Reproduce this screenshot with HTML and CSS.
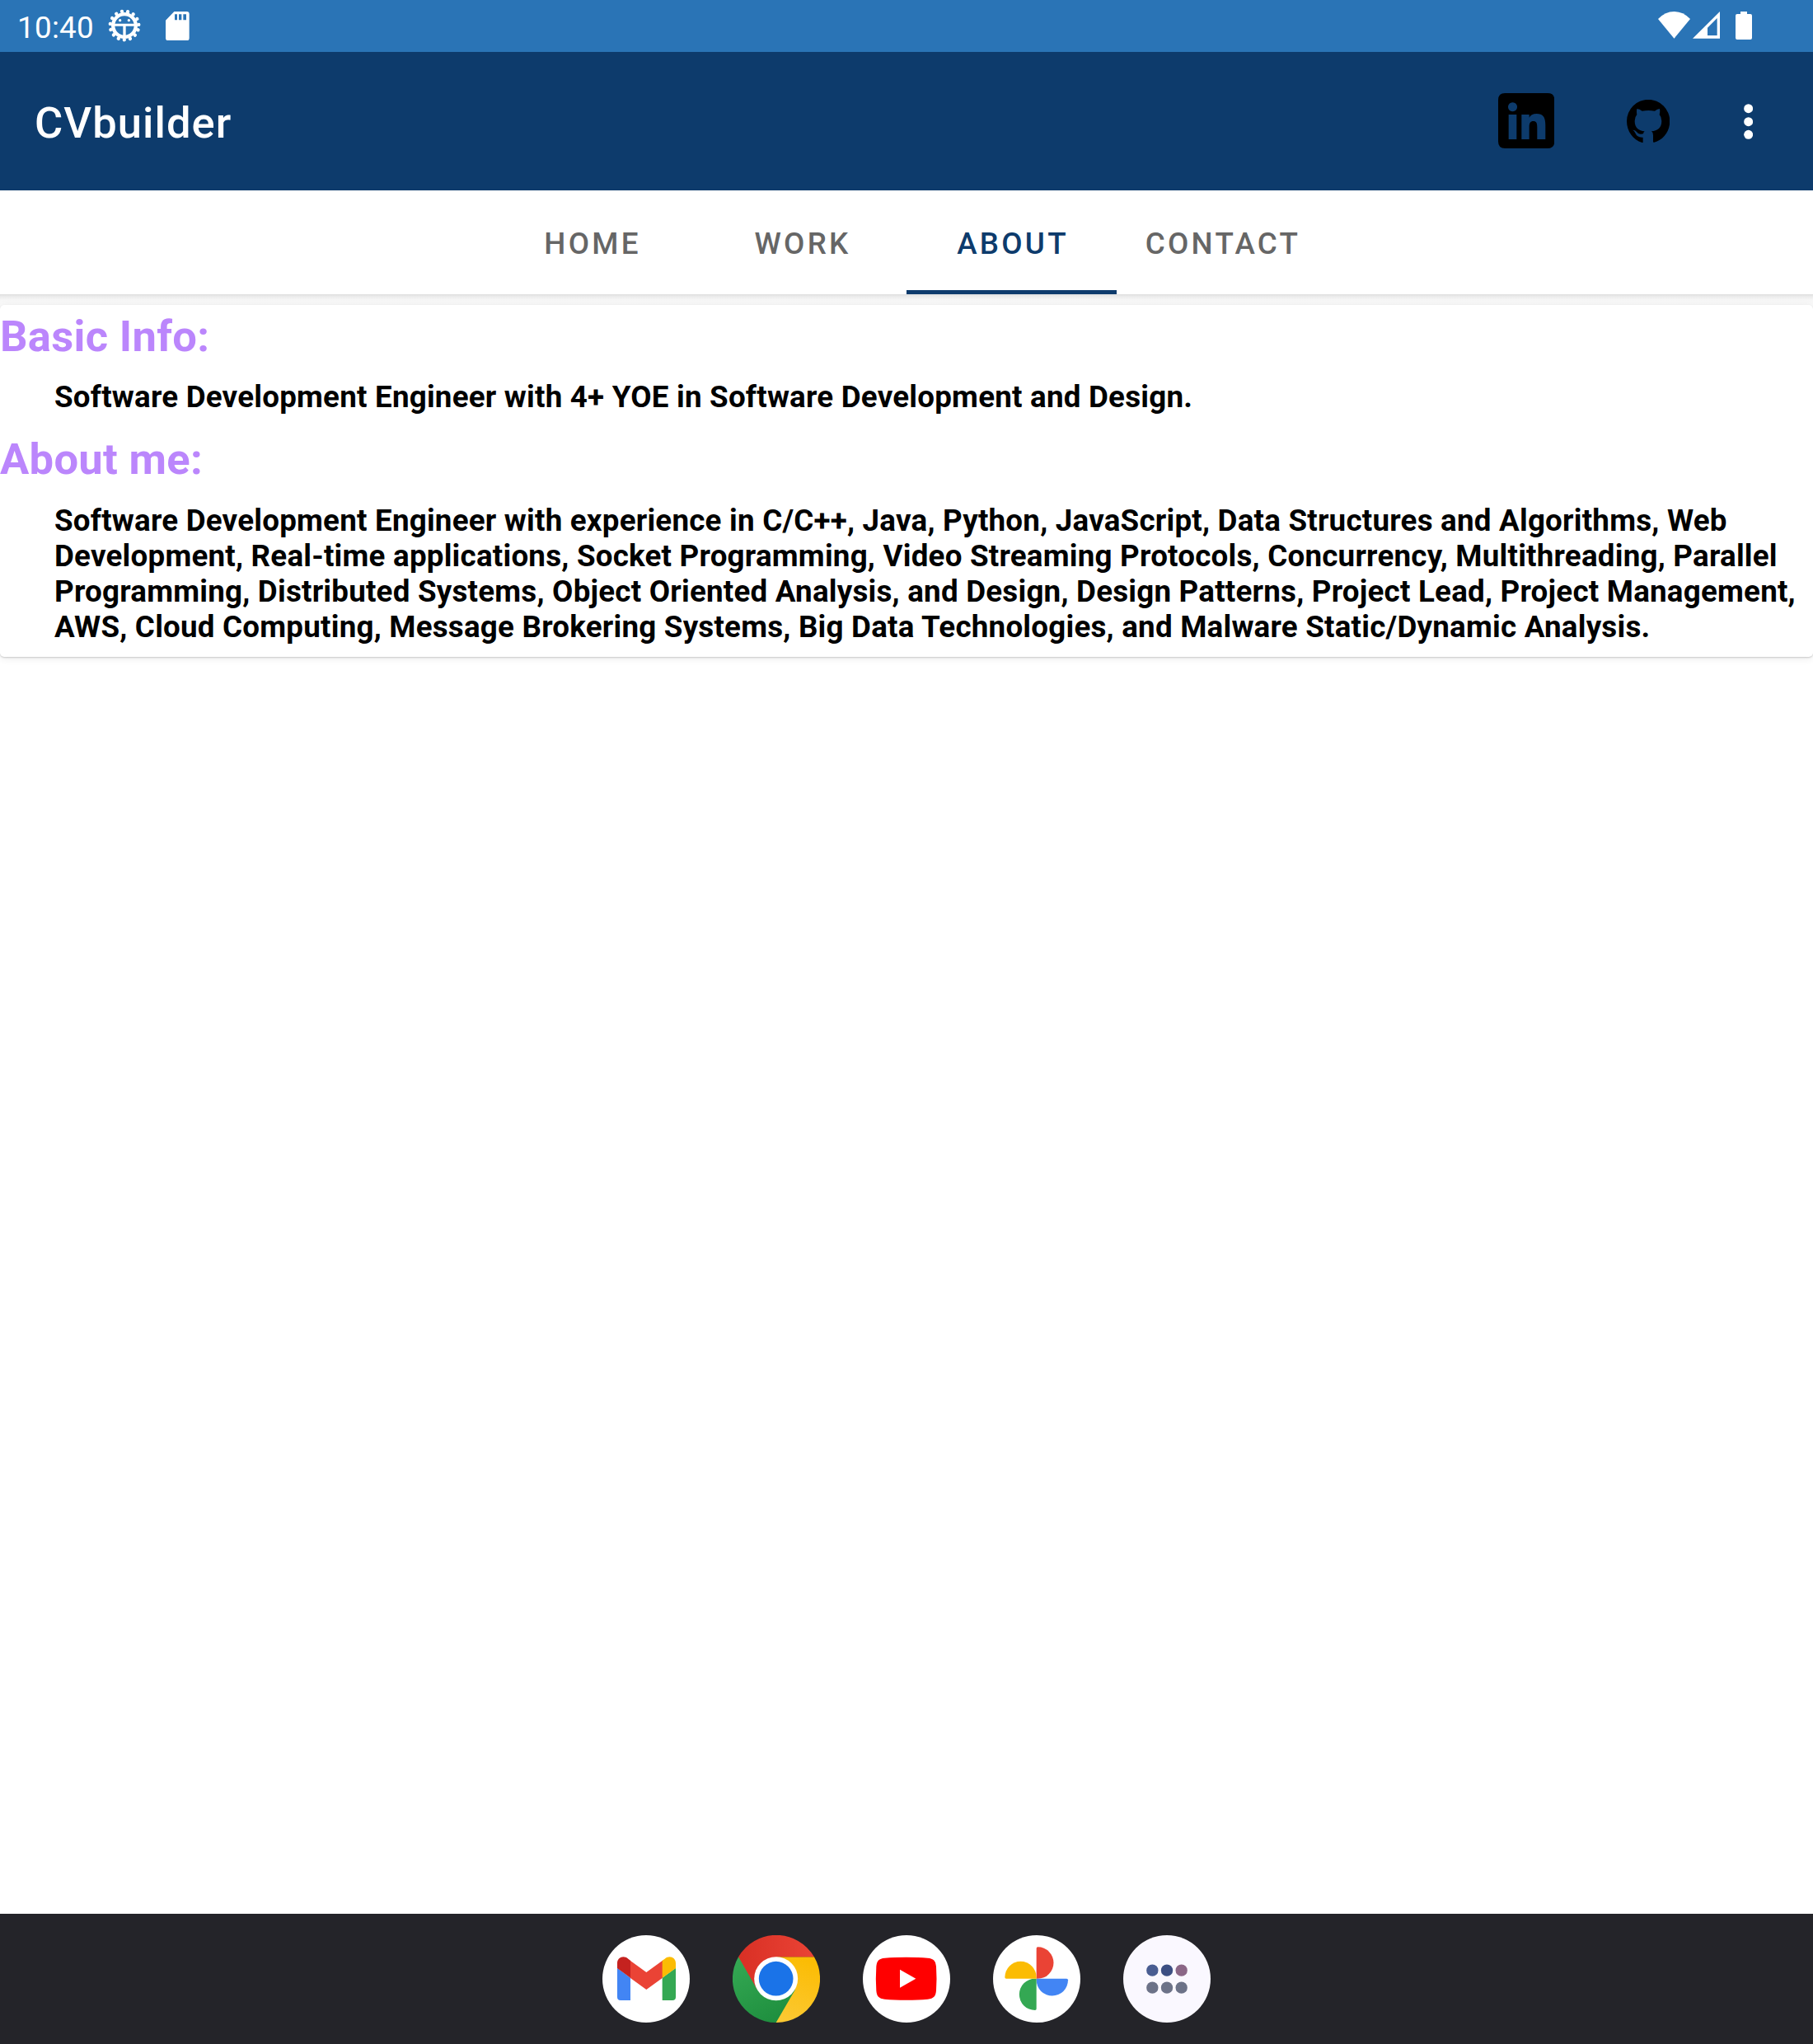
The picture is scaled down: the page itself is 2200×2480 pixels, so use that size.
FILE: index.html
```html
<!DOCTYPE html>
<html lang="en">
<head>
<meta charset="utf-8">
<title>CVbuilder</title>
<link rel="stylesheet" href="styles.css">
</head>
<body>
<div class="status">
  <span class="time">10:40</span>
  <svg class="gear" viewBox="394 34 120 120">
    <circle cx="454" cy="94" r="41.500" fill="none" stroke="#fff" stroke-width="13"/>
    <circle cx="454" cy="94" r="52" fill="none" stroke="#fff" stroke-width="13" stroke-linecap="round" stroke-dasharray="0.100 21.681" stroke-dashoffset="-16.300"/>
    <path d="M414 87h80v9h-35v38h-10V96h-35z" fill="#fff"/>
    <circle cx="438" cy="75" r="5" fill="#fff"/><circle cx="470" cy="75" r="5" fill="#fff"/>
  </svg>
  <svg class="sd" viewBox="603 41 86 106"><path fill="#fff" fill-rule="evenodd" d="M634 41h46q9 0 9 9v88q0 9-9 9h-68q-9 0-9-9V73zM636 51v21h9V51zM651 51v21h10V51zM667 51v21h11V51z"/></svg>
  <div class="spacer"></div>
  <svg class="wifi" viewBox="696 42 117 98"><path fill="#fff" d="M754.500 140L696 69Q722 42 754.500 42T813 69z"/></svg>
  <svg class="signal" viewBox="822 43 99 98"><path fill="#fff" fill-rule="evenodd" d="M822 141L921 43v98zM876 102v28h35V67z"/></svg>
  <svg class="battery" viewBox="978 42 60 102"><path fill="#fff" d="M996 42h24v9h12q6 0 6 6v81q0 6-6 6h-48q-6 0-6-6V57q0-6 6-6h12z"/></svg>
</div>
<header class="appbar">
  <h1 class="title">CVbuilder</h1>
  <svg class="linkedin" viewBox="113 339 205 201"><path fill-rule="evenodd" d="M138 339h155q25 0 25 25v151q0 25-25 25H138q-25 0-25-25V364q0-25 25-25zM165.500 373a16.500 16.500 0 1 0 .1 0zM151 417v90h29v-90zM198 417v90h28v-44c0-15 4-22 15-22s14 7 14 22v44h30v-52c0-29-9-41-32-41-14 0-23 6-27 14v-11z"/></svg>
  <svg class="github" viewBox="582 363 157 157"><path d="M641 520C606 511 582 479 582 441a78.500 78.500 0 0 1 157 0c0 38-25 70-57 77q-4 1-4-3V492q0-10-6-14c22-2 37-13 37-38q0-14-8-23 3-9 1-21-9 1-18 8-23-4-46 0-9-7-19-8-2 12 0 21-8 9-8 23c0 25 15 36 36 38q-4 3-5 9-10 3-17-1c-7-4-9-13-22-13 11 5 10 17 19 23q7 5 19 4v17q0 3 0 3z"/></svg>
  <svg class="more" viewBox="1007 378 34 130"><g fill="#fff"><circle cx="1024" cy="395" r="16.500"/><circle cx="1024" cy="443" r="16.500"/><circle cx="1024" cy="490" r="16.500"/></g></svg>
</header>
<nav class="tabs">
  <span class="tab">HOME</span><span class="tab">WORK</span><span class="tab active">ABOUT</span><span class="tab">CONTACT</span>
</nav>
<main class="content">
  <section class="card">
    <h2 class="heading">Basic Info:</h2>
    <p class="text">Software Development Engineer with 4+ YOE in Software Development and Design.</p>
    <h2 class="heading second">About me:</h2>
    <p class="text last">Software Development Engineer with experience in C/C++, Java, Python, JavaScript, Data Structures and Algorithms, Web<br>Development, Real-time applications, Socket Programming, Video Streaming Protocols, Concurrency, Multithreading, Parallel<br>Programming, Distributed Systems, Object Oriented Analysis, and Design, Design Patterns, Project Lead, Project Management,<br>AWS, Cloud Computing, Message Brokering Systems, Big Data Technologies, and Malware Static/Dynamic Analysis.</p>
  </section>
</main>
<footer class="taskbar">
  <svg class="app" viewBox="63 114 318 318">
    <circle cx="222" cy="273" r="159" fill="#fff"/>
    <path fill="#4285f4" d="M117 233l48 36v82h-36q-12 0-12-12z"/>
    <path fill="#34a853" d="M330 233l-49 36v82h37q12 0 12-12z"/>
    <path fill="#ea4335" d="M164 206l59 43 59-43v63l-59 43-59-43z"/>
    <path fill="#c5221f" d="M117 234v-18c0-22 24-31 40-16l8 6v63z"/>
    <path fill="#fbbc04" d="M330 234v-18c0-22-24-31-40-16l-9 6v63z"/>
  </svg>
  <svg class="app" viewBox="537 114 318 318">
    <defs>
      <linearGradient id="red" x1="0" x2="1"><stop offset="0" stop-color="#d93025"/><stop offset="1" stop-color="#ea4335"/></linearGradient>
      <linearGradient id="green" x1="0.700" y1="1" x2="0.200" y2="0"><stop offset="0" stop-color="#1e8e3e"/><stop offset="1" stop-color="#34a853"/></linearGradient>
      <linearGradient id="yellow" x1="0.300" y1="1" x2="0.600" y2="0"><stop offset="0" stop-color="#fcc934"/><stop offset="1" stop-color="#fbbc04"/></linearGradient>
    </defs>
    <path fill="url(#yellow)" d="M696 193h137.700A159 159 0 0 1 695 432l-40-80z"/>
    <path fill="url(#green)" d="M695 432A159 159 0 0 1 558.300 193L640 230l56 83 69-1z"/>
    <path fill="url(#red)" d="M558.300 193a159 159 0 0 1 275.400 0H696l-69 120z"/>
    <circle cx="695" cy="272" r="79.500" fill="#fff"/><circle cx="695" cy="272" r="62.500" fill="#1a73e8"/>
  </svg>
  <svg class="app" viewBox="81 114 318 318">
    <circle cx="240" cy="273" r="159" fill="#fff"/>
    <path fill="red" d="M239 194q45 0 78 3c22 2 29 10 31 31q3 44 0 88c-2 21-9 29-31 31q-33 3-78 3t-78-3c-22-2-29-10-31-31q-3-44 0-88c2-21 9-29 31-31q33-3 78-3z"/>
    <path fill="#fff" d="M216 239l58 33-58 33z"/>
  </svg>
  <svg class="app" viewBox="555 114 318 318">
    <circle cx="714" cy="273" r="159" fill="#fff"/>
    <path fill="#ea4335" d="M713 272V162q0-5 5-5a57.500 57.500 0 0 1 0 115z"/>
    <path fill="#4285f4" d="M713 272h110q5 0 5 5a57.500 57.500 0 0 1-115 0z"/>
    <path fill="#34a853" d="M713 272v110q0 5-5 5a57.500 57.500 0 0 1 0-115z"/>
    <path fill="#fbbc04" d="M713 272H603q-5 0-5-5a57.500 57.500 0 0 1 115 0z"/>
  </svg>
  <svg class="app" viewBox="99 114 318 318">
    <circle cx="258" cy="273" r="159" fill="#faf8ff"/>
    <circle cx="205" cy="242" r="21.500" fill="#495d92"/><circle cx="258" cy="242" r="21.500" fill="#3c4f83"/><circle cx="311" cy="242" r="21.500" fill="#8b6787"/>
    <g fill="#6c7288"><circle cx="205" cy="305" r="21.500"/><circle cx="258" cy="305" r="21.500"/><circle cx="311" cy="305" r="21.500"/></g>
  </svg>
</footer>
</body>
</html>
```
FILE: styles.css
```css
* { box-sizing: border-box; }
body {
  margin: 0;
  width: 2200px;
  height: 2480px;
  display: flex;
  flex-direction: column;
  background: #fff;
  color: #000;
  font-family: Roboto, sans-serif;
  overflow: hidden;
}
h1, h2, p { margin: 0; }
svg { display: block; flex: none; }

.status {
  height: 63px;
  flex: none;
  display: flex;
  align-items: flex-start;
  padding: 0 74px 0 21px;
  background: #2a74b6;
}
.time {
  width: 110px;
  padding-top: 12px;
  color: #fff;
  font-size: 36.75px;
  line-height: 43px;
  letter-spacing: .3px;
}
.gear { width: 40px; height: 40px; margin: 11px 0 0; }
.sd { width: 28.700px; height: 35.300px; margin: 13.700px 0 0 30px; }
.spacer { flex: 1; }
.wifi { width: 39px; height: 32.700px; margin-top: 14px; }
.signal { width: 33px; height: 32.700px; margin: 14.300px 0 0 3px; }
.battery { width: 20px; height: 34px; margin: 14px 0 0 19px; }

.appbar {
  height: 168px;
  flex: none;
  display: flex;
  align-items: flex-start;
  padding: 0 73px 0 42px;
  background: #0d3b6c;
}
.title {
  flex: 1;
  padding-top: 55px;
  color: #fff;
  font-size: 52.500px;
  font-weight: 500;
  line-height: 62px;
  letter-spacing: 1.050px;
}
.linkedin { width: 68.300px; height: 67px; margin-top: 50px; }
.github { width: 52.300px; height: 52.300px; margin: 58px 0 0 88px; }
.more { width: 11.300px; height: 43.300px; margin: 63px 0 0 89.500px; }

.tabs {
  height: 126px;
  flex: none;
  display: flex;
  justify-content: center;
  background: #fff;
}
.tab {
  width: 255px;
  padding: 43px 0 0 3px;
  text-align: center;
  color: #666;
  font-size: 36.750px;
  font-weight: 500;
  line-height: 43px;
  letter-spacing: .0893em;
}
.active { color: #0d3b6c; border-bottom: 5px solid #0d3b6c; }

.content {
  flex: 1;
  padding-top: 13px;
  background: linear-gradient(#dfdfdf, #ececec 3px, #f6f6f6 7px, #f9f9f9 12px, #f9f9f9 16px, #fff 17px);
}
.card {
  height: 427px;
  padding-top: 7px;
  border-radius: 5px;
  background: #fff;
  box-shadow: 0 1px 2px rgba(0, 0, 0, .18), 0 2px 10px rgba(0, 0, 0, .08);
}
.heading {
  color: #bb86fc;
  font-size: 52.500px;
  font-weight: 700;
  line-height: 62px;
  letter-spacing: .310px;
}
.second { margin-top: 23px; }
.text {
  padding: 21px 0 0 66px;
  font-size: 36.750px;
  font-weight: 700;
  line-height: 43px;
  letter-spacing: .218px;
  white-space: nowrap;
}
.last { padding-top: 22px; }

.taskbar {
  height: 158px;
  flex: none;
  display: flex;
  justify-content: center;
  align-items: flex-start;
  gap: 52px;
  padding-top: 26px;
  background: #242429;
}
.app { width: 106px; height: 106px; }
```
